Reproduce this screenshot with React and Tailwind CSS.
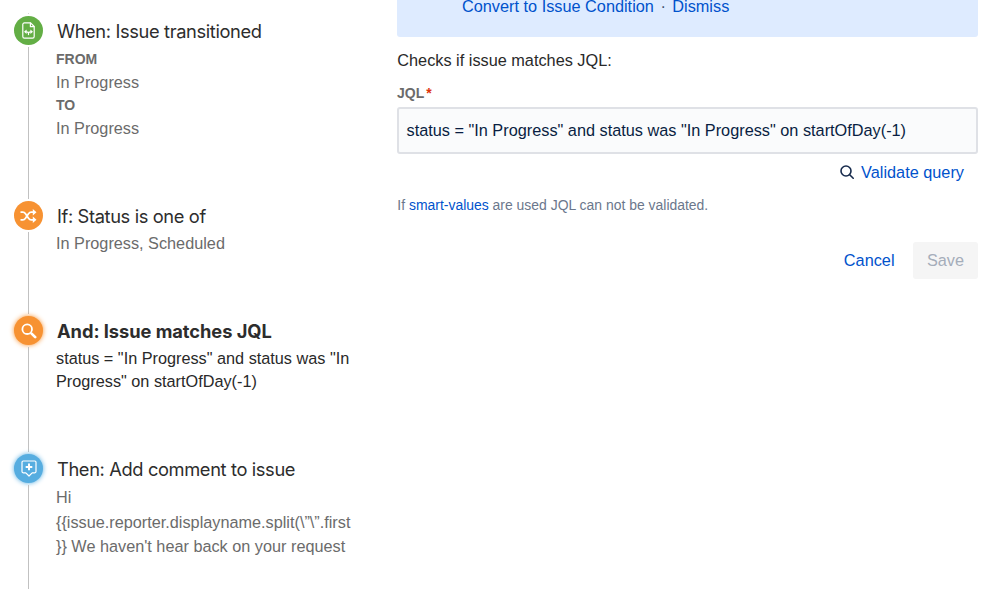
function TransitionIcon() {
  return (
    <svg width="13" height="17" viewBox="0 0 13 17" fill="none" stroke="white" strokeWidth="1.2" strokeLinejoin="round" strokeLinecap="round">
      <path d="M2.4 .9h6.2l3.6 3.6v10a1.6 1.6 0 0 1-1.6 1.6H2.4A1.6 1.6 0 0 1 .8 14.5v-12A1.6 1.6 0 0 1 2.4 .9z" />
      <path d="M8.4 1.2v3.5h3.5" />
      <path d="M6.5 12.6v-1.3c0-.9-.8-1.5-2-1.5M6.5 11.3c0-.9.8-1.5 2-1.5" />
      <path d="M4.6 7.6v4.4L2 9.8zM8.4 7.6v4.4l2.6-2.2z" fill="white" stroke="none" />
    </svg>
  )
}

function ShuffleIcon() {
  return (
    <svg width="17" height="14" viewBox="0 0 17 14" fill="none" stroke="white" strokeWidth="1.8">
      <path d="M.5 3.2h2.3c1.3 0 2 .6 2.7 1.6l3 4.4c.7 1 1.4 1.6 2.7 1.6h2.5" />
      <path d="M.5 10.8h2.3c1.3 0 2-.6 2.7-1.6l3-4.4c.7-1 1.4-1.6 2.7-1.6h2.5" />
      <path d="M12.8 0l3.7 3.2-3.7 3.2zM12.8 7.6l3.7 3.2-3.7 3.2z" fill="white" stroke="none" />
    </svg>
  )
}

function SearchIcon() {
  return (
    <svg width="16" height="16" viewBox="0 0 16 16" fill="none" stroke="white" strokeLinecap="round">
      <circle cx="6.2" cy="6.2" r="4.8" strokeWidth="1.8" />
      <path d="M10.6 10.6l3.6 3.5" strokeWidth="2.7" />
    </svg>
  )
}

function CommentIcon() {
  return (
    <svg width="16" height="17" viewBox="0 0 16 17" fill="none" stroke="white" strokeWidth="1.2" strokeLinejoin="round">
      <path d="M2.2 1h11.6c.7 0 1.2.5 1.2 1.2v9.4c0 .7-.5 1.2-1.2 1.2h-2.6L8 16l-3.2-3.2H2.2c-.7 0-1.2-.5-1.2-1.2V2.2C1 1.5 1.5 1 2.2 1z" />
      <path d="M8 3.6v6.6M4.7 6.9h6.6" strokeWidth="2" />
    </svg>
  )
}

function Step({ icon, badge, height, title, bold, children }) {
  return (
    <div className={`flex ${height}`}>
      <div className="flex w-[29px] shrink-0 flex-col items-center">
        <div className={`my-0.5 flex size-[29px] shrink-0 items-center justify-center rounded-full ${badge}`}>{icon}</div>
        <div className="w-px flex-1 bg-[#c1c1c1]" />
      </div>
      <div className="ml-[13px] w-[300px] pt-1 font-['Liberation_Sans',Arial,sans-serif] text-[16.25px] leading-[23.3px] text-[#6b6b6b]">
        <h2 className={`mb-[3px] ml-px whitespace-nowrap font-[Inter,sans-serif] text-[18.3px] leading-[26px] text-[#2d2d2d] ${bold ? 'font-bold tracking-[-0.05px]' : 'font-normal tracking-[-0.37px]'}`}>{title}</h2>
        {children}
      </div>
    </div>
  )
}

export default function App() {
  return (
    <div className="flex h-[589px] w-[999px] overflow-hidden bg-white font-['Liberation_Sans',Arial,sans-serif] text-[16.3px]">
      <div className="w-[397px] shrink-0 pl-3.5 pt-[13px]">
        <div className="ml-3.5 h-px w-px bg-[#d8d8d8]" />
        <Step icon={<TransitionIcon />} badge="bg-[#63ae45]" height="h-[185px]" title="When: Issue transitioned">
          <div className="mt-[3.5px] text-[14px] font-bold">FROM</div>
          <div>In Progress</div>
          <div className="text-[14px] font-bold">TO</div>
          <div>In Progress</div>
        </Step>
        <Step icon={<ShuffleIcon />} badge="bg-[#f79232]" height="h-[115px]" title="If: Status is one of">
          <div>In Progress, Scheduled</div>
        </Step>
        <Step icon={<SearchIcon />} badge="bg-[#f79232] shadow-[0_0_5px_#f79232]" height="h-[138px]" title="And: Issue matches JQL" bold>
          <div className="whitespace-nowrap text-[#292929]">
            status = "In Progress" and status was "In<br />Progress" on startOfDay(-1)
          </div>
        </Step>
        <Step icon={<CommentIcon />} badge="bg-[#56ade0] shadow-[0_0_5px_#56ade0]" height="h-[137px]" title="Then: Add comment to issue">
          <div className="whitespace-nowrap leading-[24.5px]">
            Hi<br />{'{{issue.reporter.displayname.split(\\”\\”.first'}<br />{"}} We haven't hear back on your request"}
          </div>
        </Step>
      </div>

      <div className="w-[581px]">
        <div className="h-[37px] rounded-b-[3px] bg-[#deebff] pl-[65px] leading-[13px] text-[#0052cc]">
          <a>Convert to Issue Condition</a>
          <span className="mx-[6.5px] text-[#42526e]">·</span>
          <a>Dismiss</a>
        </div>
        <p className="mt-3 pl-[0.3px] leading-[23px] text-[#292929]">Checks if issue matches JQL:</p>
        <div className="mt-[11px] h-6 text-[14px] font-bold leading-[20px] text-[#6b6b6b]">
          JQL<span className="ml-0.5 text-[#de350b]">*</span>
        </div>
        <div className="flex h-[47px] items-center rounded-[3px] border-2 border-[#dfe1e6] bg-[#fafbfc] px-[7.5px] text-[#091e42]">
          status = "In Progress" and status was "In Progress" on startOfDay(-1)
        </div>
        <div className="mt-1.5 flex h-6 items-center justify-end gap-[7px] pr-3.5 text-[#0052cc]">
          <svg width="14" height="15" viewBox="0 0 14 15" fill="none" stroke="#172b4d" strokeWidth="1.6" strokeLinecap="round">
            <circle cx="6" cy="6" r="5" />
            <path d="M9.7 9.7l3.5 3.5" />
          </svg>
          <a>Validate query</a>
        </div>
        <p className="mt-[11px] pl-[0.3px] text-[13.95px] leading-[20px] text-[#6b778c]">
          If <a className="text-[#0052cc]">smart-values</a> are used JQL can not be validated.
        </p>
        <div className="mt-[27px] flex justify-end gap-[18.5px]">
          <button className="text-[#0052cc]">Cancel</button>
          <button className="h-[37px] w-[65px] rounded-[3px] bg-[#f5f5f5] text-[#a5adba]">Save</button>
        </div>
      </div>
    </div>
  )
}
